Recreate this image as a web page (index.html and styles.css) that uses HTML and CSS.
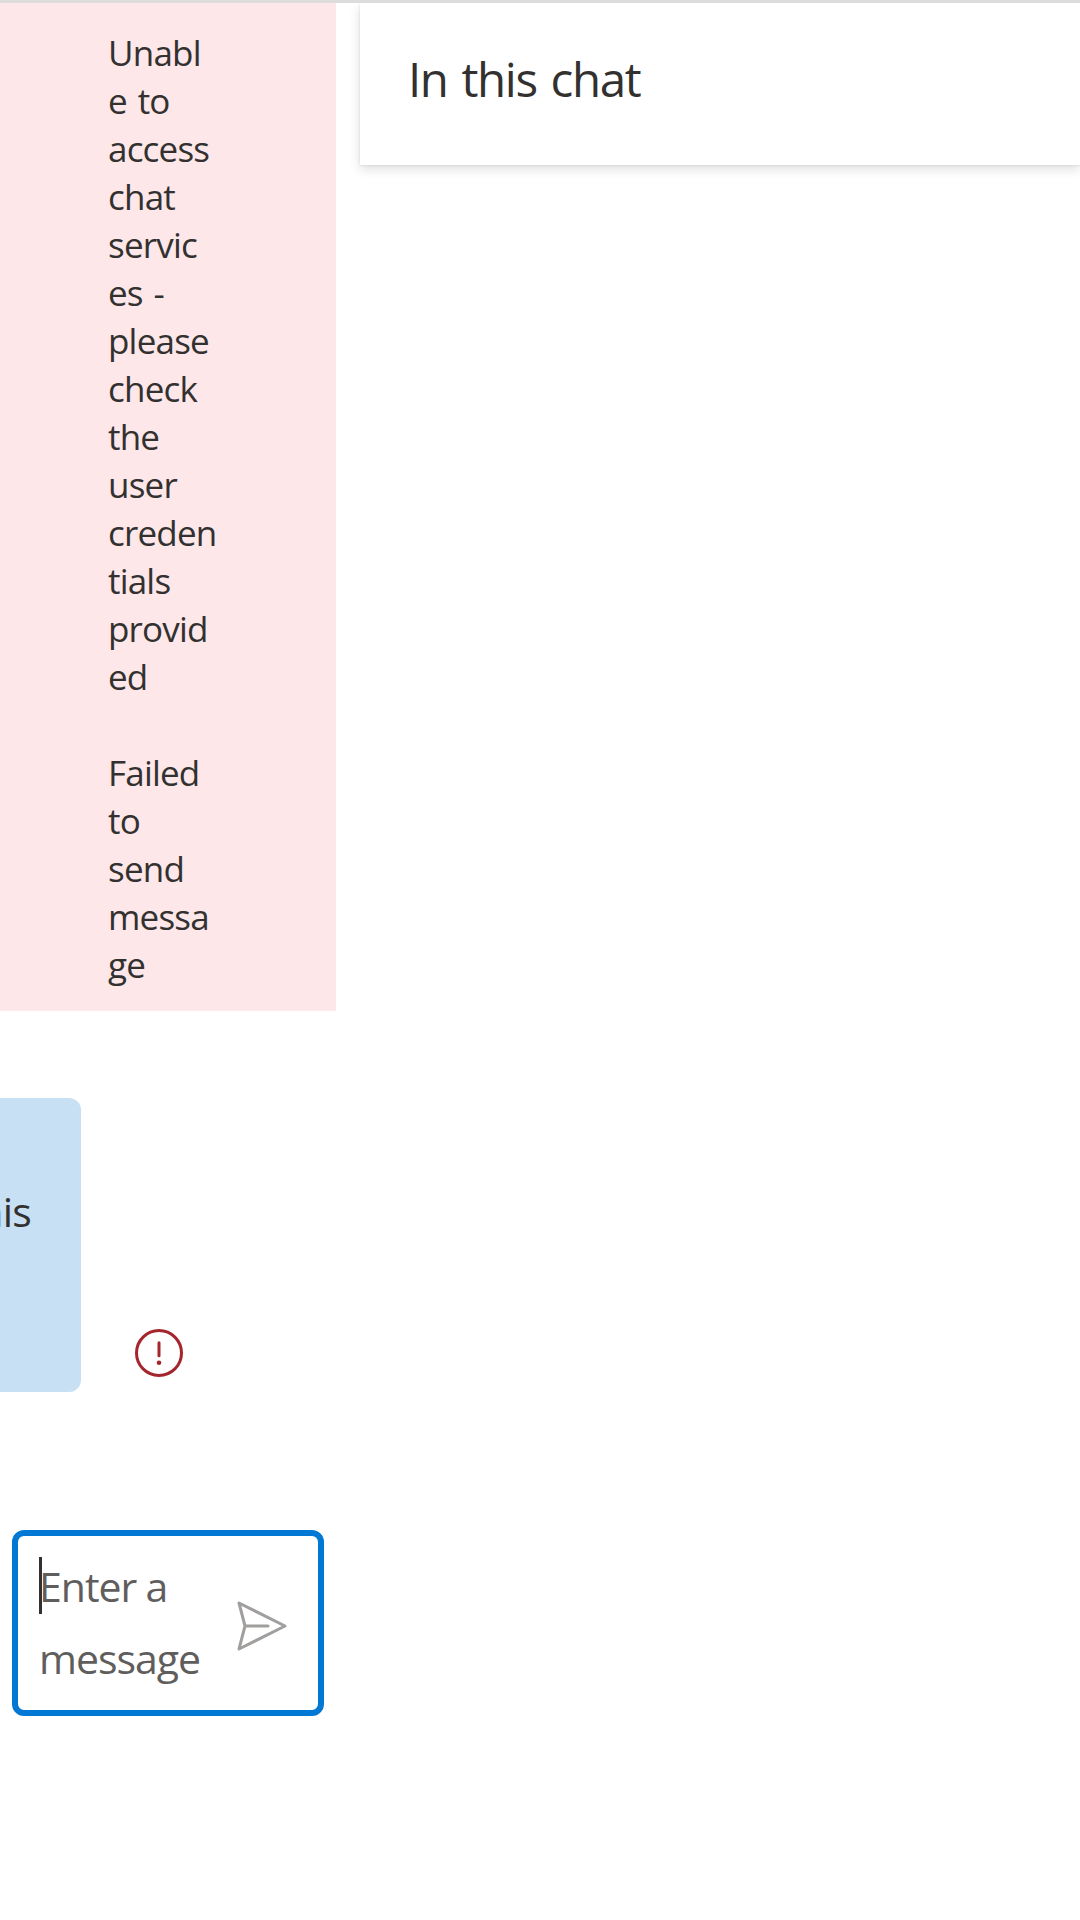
FILE: index.html
```html
<!DOCTYPE html>
<html lang="en">
<head>
<meta charset="utf-8">
<title>Chat</title>
<link rel="stylesheet" href="styles.css">
</head>
<body>
<div class="app">
  <main class="chat">
    <section class="error-bar" role="alert">
      <p class="error-text">Unabl<br>e to<br>access<br>chat<br>servic<br>es -<br>please<br>check<br>the<br>user<br>creden<br>tials<br>provid<br>ed</p>
      <p class="error-text">Failed<br>to<br>send<br>messa<br>ge</p>
    </section>
    <section class="thread">
      <div class="bubble"><span class="bubble-text">his</span></div>
      <svg class="status" viewBox="0 0 48 48" role="img" aria-label="Message failed">
        <circle cx="24" cy="24" r="22.5"/>
        <path d="M24 13.7v13"/>
        <circle class="status-dot" cx="24" cy="33.8" r="2.3"/>
      </svg>
    </section>
    <section class="sendbox">
      <div class="placeholder"><span class="caret"></span>Enter a<br>message</div>
      <svg class="send" viewBox="0 0 50 50" role="img" aria-label="Send">
        <path d="M2 2 48 25 2 48 8 25ZM8 25H31"/>
      </svg>
    </section>
  </main>
  <aside class="people">
    <h2 class="people-title">In this chat</h2>
  </aside>
</div>
</body>
</html>
```
FILE: styles.css
```css
* {
  box-sizing: border-box;
}

body {
  margin: 0;
  background: #fff;
  color: #323130;
  font-family: "Segoe UI", "Open Sans", "Noto Sans", sans-serif;
}

.app {
  display: flex;
  gap: 24px;
  height: 1920px;
  border-top: 3px solid #dcdcdc;
  overflow: hidden;
}

.chat {
  flex: 0 0 336px;
  display: flex;
  flex-direction: column;
}

.error-bar {
  display: flex;
  flex-direction: column;
  gap: 48px;
  height: 1008px;
  padding: 26px 108px 22px;
  background: #fde7e9;
}

.error-text {
  margin: 0;
  font-size: 35px;
  letter-spacing: -0.8px;
  word-spacing: 2.5px;
  line-height: 48px;
  white-space: nowrap;
}

.thread {
  display: flex;
  align-items: flex-end;
  gap: 54px;
  height: 294px;
  margin-top: 87px;
}

.bubble {
  display: flex;
  justify-content: flex-end;
  width: 81px;
  height: 294px;
  padding: 83px 50px 0 0;
  border-radius: 0 12px 12px 0;
  background: #c7e0f4;
}

.bubble-text {
  font-size: 41px;
  line-height: 60px;
  letter-spacing: -0.8px;
}

.status {
  width: 48px;
  height: 48px;
  margin-bottom: 15px;
  fill: none;
  stroke: #a4262c;
  stroke-width: 3;
  stroke-linecap: round;
}

.status .status-dot {
  fill: #a4262c;
  stroke: none;
}

.sendbox {
  display: flex;
  align-items: center;
  height: 186px;
  margin: 138px 12px 0;
  padding: 0 31.5px 2px 21px;
  justify-content: space-between;
  border: 6px solid #0078d4;
  border-radius: 12px;
}

.placeholder {
  position: relative;
  color: #605e5c;
  font-size: 41px;
  letter-spacing: -1px;
  word-spacing: -0.5px;
  line-height: 72px;
  white-space: nowrap;
}

.caret {
  position: absolute;
  left: 0;
  top: 7px;
  width: 3px;
  height: 57px;
  background: #323130;
}

.send {
  width: 50px;
  height: 50px;
  margin-top: 7px;
  fill: none;
  stroke: #a19f9d;
  stroke-width: 3;
  stroke-linecap: round;
  stroke-linejoin: round;
}

.people {
  flex: 1;
  height: 162px;
  padding: 40px 48px;
  box-shadow: 0 4.8px 10.8px rgba(0, 0, 0, 0.13), 0 0.9px 2.7px rgba(0, 0, 0, 0.11);
}

.people-title {
  margin: 0;
  font-size: 47.5px;
  font-weight: 400;
  line-height: 72px;
  letter-spacing: -1.4px;
  word-spacing: 3px;
}
```
